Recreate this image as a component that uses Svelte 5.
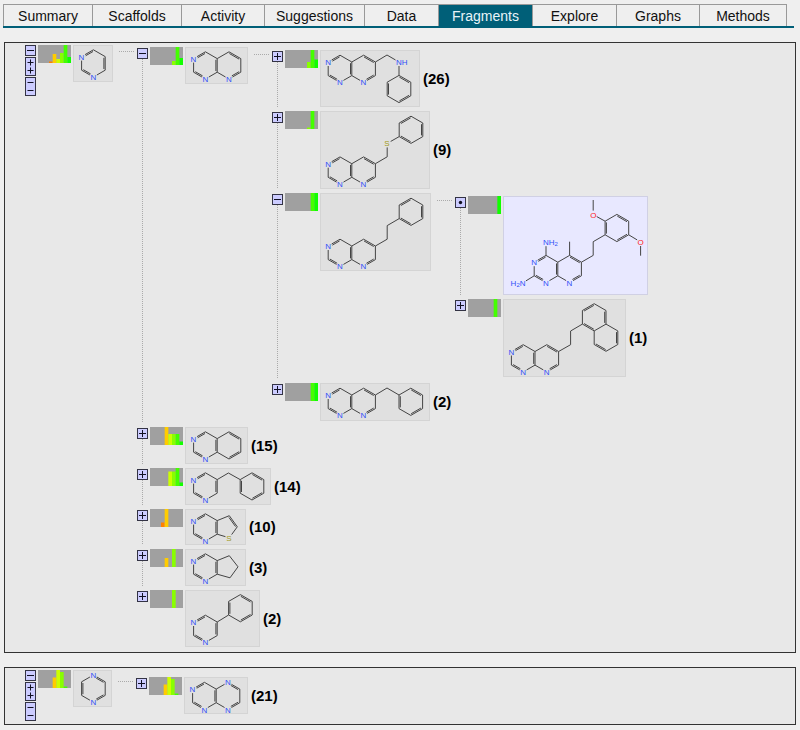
<script>
  const tabs = ['Summary', 'Scaffolds', 'Activity', 'Suggestions', 'Data', 'Fragments', 'Explore', 'Graphs', 'Methods'];
  let active = $state('Fragments');

  const scale = ['#ff0000', '#ff2200', '#ff4400', '#ff8000', '#ffcc00', '#ccff00', '#88ff00', '#44ff00', '#11ff00'];
  const atomColors = { N: '#3050f8', O: '#ff2020', S: '#a09a20' };

  // Ring corners run clockwise from the top one; edge i joins corner i to i + 1.
  const corners = [[0, -13.6], [11.8, -6.8], [11.8, 6.8], [0, 13.6], [-11.8, 6.8], [-11.8, -6.8]];
  const hex = (cx, cy, doubles, labels = {}, skip = []) => ({
    pts: corners.map(([x, y], i) => [cx + x, cy + y, labels[i]]), doubles, skip, closed: true
  });
  const chain = (pts, doubles = []) => ({ pts, doubles, skip: [], closed: false });
  const pyrimidine = (cx, cy, doubles = [1, 3, 5]) => hex(cx, cy, doubles, { 3: 'N', 5: 'N' });
  const pyrido = (cx, cy) => [pyrimidine(cx, cy), hex(cx + 23.6, cy, [0, 2], { 3: 'N' }, [4])];

  function lines(parts) {
    const out = [];
    for (const { pts, doubles, skip, closed } of parts) {
      const n = closed ? pts.length : pts.length - 1;
      for (let i = 0; i < n; i++) {
        if (skip.includes(i)) continue;
        const a = pts[i], b = pts[(i + 1) % pts.length];
        const len = Math.hypot(b[0] - a[0], b[1] - a[1]);
        const ux = (b[0] - a[0]) / len, uy = (b[1] - a[1]) / len;
        const seg = (off, cut) => {
          const s = a[2] ? 4 : cut, e = b[2] ? 4 : cut;
          out.push([a[0] + ux * s - uy * off, a[1] + uy * s + ux * off, b[0] - ux * e - uy * off, b[1] - uy * e + ux * off]);
        };
        seg(0, 0);
        if (doubles.includes(i)) seg(1.3, 1.2);
      }
    }
    return out;
  }

  function labels(parts) {
    const seen = new Map();
    for (const { pts } of parts)
      for (const [x, y, t] of pts) if (t) seen.set(`${x.toFixed(1)},${y.toFixed(1)}`, [x, y, t]);
    return [...seen.values()];
  }

  const leaf = (w, h, mol, bars, count, extra = {}) => ({ w, h, mol, bars, count, ...extra });

  let roots = $state([
    leaf(40, 37, [pyrimidine(20.4, 18.4)], { 3: 1.5, 4: 9, 5: 4, 6: 10, 7: 18, 8: 6 }, null, {
      open: true,
      children: [
        leaf(63, 37, pyrido(20.4, 18.4), { 6: 4, 7: 18, 8: 7 }, null, {
          open: true,
          children: [
            leaf(100, 57, [...pyrido(20, 18.8),
              chain([[55.4, 12], [67, 5], [79, 12, 'NH']]),
              chain([[79, 12, 'NH'], [79, 25.4]]),
              hex(79, 39, [0, 2, 4])], { 6: 6, 7: 18, 8: 8.5 }, 26),
            leaf(110, 78, [...pyrido(20, 59.5),
              chain([[55.4, 52.7], [67.2, 45.8], [67.2, 32.4, 'S'], [79.2, 25.6]]),
              hex(91, 18.8, [1, 3, 5])], { 6: 1.5, 7: 18 }, 9),
            leaf(111, 78, [...pyrido(20, 59.8),
              chain([[55.4, 53], [67.2, 46.2], [67.2, 32.6], [79.2, 25.6]]),
              hex(91, 18.8, [1, 3, 5])], { 7: 18, 8: 18 }, null, {
              open: true,
              children: [
                leaf(145, 99, [
                  ...pyrido(43, 73),
                  chain([[43, 59.4], [43, 46.2, 'NH2']]),
                  chain([[31.2, 79.8], [19.5, 87, 'H2N']]),
                  chain([[66.6, 59.4], [66.6, 45.7]]),
                  chain([[78.4, 66.2], [90.2, 59.4], [90.2, 45.7], [102.1, 38.8]]),
                  hex(113.9, 32, [0, 2, 4]),
                  chain([[102.1, 25.2], [90.2, 18.6, 'O'], [90.2, 4]]),
                  chain([[125.7, 38.8], [137.6, 46, 'O'], [137.6, 59.7]])
                ], { 8: 18 }, null, { dot: true, picked: true }),
                leaf(123, 78, [...pyrido(20.2, 59.3),
                  chain([[55.6, 52.5], [67.6, 45.7], [67.6, 32], [79.4, 25.1]]),
                  hex(91.2, 18.3, [1, 3, 5]),
                  hex(103, 38.7, [1, 3], {}, [5])], { 7: 18 }, 1)
              ]
            }),
            leaf(110, 38, [...pyrido(20, 18.8),
              chain([[55.4, 12], [67, 5], [79, 12]]),
              hex(90.8, 18.8, [0, 2, 4])], { 7: 18, 8: 18 }, 2)
          ]
        }),
        leaf(63, 37, [pyrimidine(20.4, 18.4), hex(44, 18.4, [0, 2], {}, [4])], { 4: 18, 5: 11, 6: 11, 7: 11, 8: 3.5 }, 15),
        leaf(86, 37, [pyrimidine(20.4, 18.4),
          chain([[32.2, 11.6], [43.4, 5], [55.2, 11.6]]),
          hex(67, 18.4, [0, 2, 4])], { 5: 14.5, 6: 14.5, 7: 18, 8: 3.5 }, 14),
        leaf(61, 36, [pyrimidine(20.4, 18.4),
          chain([[32.2, 11.6], [44.3, 6.7], [52.3, 17.8], [44.3, 28.8, 'S'], [32.2, 25.2]], [1])], { 3: 4.5, 4: 18 }, 10),
        leaf(61, 37, [pyrimidine(20.4, 18.4),
          chain([[32.2, 11.6], [44.3, 6.7], [53, 17.8], [45, 28.8], [32.2, 25.2]])], { 4: 9, 6: 18 }, 3),
        leaf(75, 57, [pyrimidine(20.4, 38.8),
          chain([[32.2, 32], [43.6, 25]]),
          hex(55.4, 18.2, [0, 2, 4])], { 6: 18 }, 2)
      ]
    }),
    leaf(39, 37, [hex(20.4, 18.6, [0, 2, 4], { 0: 'N', 3: 'N' })], { 4: 10.5, 5: 18, 6: 16, 7: 1.5 }, null, {
      open: true,
      children: [
        leaf(64, 37, [pyrimidine(20.4, 18.9), hex(44, 18.9, [0, 2], { 0: 'N', 3: 'N' }, [4])],
          { 4: 10.5, 5: 18, 6: 16, 7: 1.5 }, 21)
      ]
    })
  ]);

  function setAll(node, open) {
    for (const child of node.children ?? []) {
      if (child.children) child.open = open;
      setAll(child, open);
    }
  }
</script>

{#snippet glyph(kind)}
  {#if kind === 'plus'}
    <svg width="9" height="9" viewBox="0 0 9 9"><path d="M1 4.5H8M4.5 1V8" /></svg>
  {:else if kind === 'minus'}
    <svg width="9" height="9" viewBox="0 0 9 9"><path d="M1 4.5H8" /></svg>
  {:else if kind === 'dot'}
    <svg width="9" height="9" viewBox="0 0 9 9"><circle cx="4.5" cy="4.5" r="1.7" /></svg>
  {:else if kind === 'plusplus'}
    <svg width="9" height="17" viewBox="0 0 9 17"><path d="M1.5 4.5H7.5M4.5 1.5V7.5M1.5 12.5H7.5M4.5 9.5V15.5" /></svg>
  {:else}
    <svg width="9" height="17" viewBox="0 0 9 17"><path d="M1.5 4.5H7.5M1.5 12.5H7.5" /></svg>
  {/if}
{/snippet}

{#snippet body(node)}
  <svg class="histogram" viewBox="0 0 33 18" aria-hidden="true">
    {#each Object.entries(node.bars) as [slot, height]}
      <rect x={(slot * 11) / 3} y={18 - height} width={11 / 3} {height} fill={scale[slot]} />
    {/each}
  </svg>
  <div class="entry">
    <svg class="molecule" class:picked={node.picked} width={node.w} height={node.h} aria-hidden="true">
      {#each lines(node.mol) as [x1, y1, x2, y2]}
        <line {x1} {y1} {x2} {y2} />
      {/each}
      {#each labels(node.mol) as [x, y, text]}
        {#if text === 'NH2'}
          <text x={x - 3} y={y + 3} fill={atomColors.N}>NH<tspan class="sub" dy="1">2</tspan></text>
        {:else if text === 'H2N'}
          <text x={x + 3} y={y + 3} text-anchor="end" fill={atomColors.N}>H<tspan class="sub" dy="1">2</tspan><tspan dy="-1">N</tspan></text>
        {:else}
          <text x={x - 3} y={y + 3} fill={atomColors[text[0]]}>{text}</text>
        {/if}
      {/each}
    </svg>
    {#if node.count}<span class="count">({node.count})</span>{/if}
  </div>
  {#if node.children && node.open}
    <div class="branch">
      <span class="link"></span>
      <ul>
        {#each node.children as child}
          <li>
            <div class="rail">
              <button
                aria-label={child.open ? 'Collapse' : 'Expand'}
                onclick={() => { if (child.children) child.open = !child.open; }}
              >{@render glyph(child.dot ? 'dot' : child.open ? 'minus' : 'plus')}</button>
            </div>
            {@render body(child)}
          </li>
        {/each}
      </ul>
    </div>
  {/if}
{/snippet}

<nav>
  {#each tabs as tab}
    <a href="#{tab}" class:active={tab === active} onclick={() => (active = tab)}>{tab}</a>
  {/each}
</nav>

<main>
  {#each roots as root}
    <section>
      <div class="controls">
        <button aria-label="Toggle" onclick={() => (root.open = !root.open)}>{@render glyph('minus')}</button>
        <button class="tall" aria-label="Expand all" onclick={() => setAll(root, true)}>{@render glyph('plusplus')}</button>
        <button class="tall" aria-label="Collapse all" onclick={() => setAll(root, false)}>{@render glyph('minusminus')}</button>
      </div>
      {@render body(root)}
    </section>
  {/each}
</main>

<style>
  :global(body) {
    background: #efefef;
    color: #000;
    font-family: 'Liberation Sans', Arial, sans-serif;
  }
  nav {
    display: grid;
    grid-template-columns: 90fr 89fr 83fr 100fr 74fr 94fr 84fr 83fr 87fr;
    margin: 4px 6px 14px 3px;
    padding-right: 7px;
    border-bottom: 2px solid #005f78;
  }
  nav a {
    border-top: 1px solid #999;
    border-right: 1px solid #999;
    color: #111;
    font-size: 14px;
    line-height: 21px;
    padding-top: 1px;
    height: 20px;
    text-align: center;
    text-decoration: none;
  }
  nav a:first-child {
    border-left: 1px solid #999;
  }
  nav a.active {
    background: #005f78;
    color: #e8f4f8;
  }
  main {
    display: flex;
    flex-direction: column;
    gap: 14px;
    margin: 0 4px;
  }
  section {
    display: flex;
    align-items: flex-start;
    background: #e8e8e8;
    border: 1px solid #333;
    padding: 1px 4px 3px 20px;
  }
  .controls {
    display: flex;
    flex-direction: column;
    gap: 1px;
    margin: 1px 2px 0 0;
  }
  section > .histogram,
  section > .entry {
    margin-top: 1px;
  }
  button {
    display: block;
    box-sizing: border-box;
    width: 11px;
    height: 11px;
    flex: none;
    margin: 0;
    padding: 0;
    border: 1px solid #333344;
    background: #ccccff;
    line-height: 0;
    cursor: pointer;
  }
  button.tall {
    height: 19px;
  }
  button svg {
    display: block;
    stroke: #111122;
    stroke-width: 1;
    fill: #111122;
  }
  button circle {
    stroke: none;
  }
  .histogram {
    width: 33px;
    height: 18px;
    flex: none;
    margin-right: 2px;
    background: #a0a0a0;
  }
  .entry {
    display: flex;
    align-items: center;
    flex: none;
  }
  .molecule {
    display: block;
    flex: none;
    background: #e0e0e0;
    outline: 1px solid #d4d4d4;
    outline-offset: -1px;
  }
  .molecule.picked {
    background: #e8e8ff;
    outline-color: #d0d0e4;
  }
  .molecule line {
    stroke: #444;
    stroke-width: 1;
  }
  .molecule text {
    font-size: 8px;
  }
  .molecule .sub {
    font-size: 6px;
  }
  .count {
    margin-left: 3px;
    font-size: 15px;
    line-height: 18px;
    font-weight: bold;
  }
  .branch {
    display: flex;
    align-items: flex-start;
    align-self: center;
    padding: 3px 0 2px;
  }
  .link {
    flex: none;
    width: 16px;
    height: 1px;
    margin: 4px 2px 0 6px;
    background: repeating-linear-gradient(90deg, #aaa 0 1px, transparent 1px 2px);
  }
  ul {
    display: flex;
    flex-direction: column;
    gap: 4px;
    margin: 0;
    padding: 0;
    list-style: none;
  }
  li {
    display: flex;
    align-items: flex-start;
  }
  .rail {
    display: flex;
    flex-direction: column;
    align-items: center;
    align-self: stretch;
    padding-top: 1px;
    margin-right: 2px;
  }
  li:not(:last-child) > .rail::after {
    content: '';
    flex: 1;
    width: 1px;
    background: repeating-linear-gradient(#aaa 0 1px, transparent 1px 2px);
  }
</style>
